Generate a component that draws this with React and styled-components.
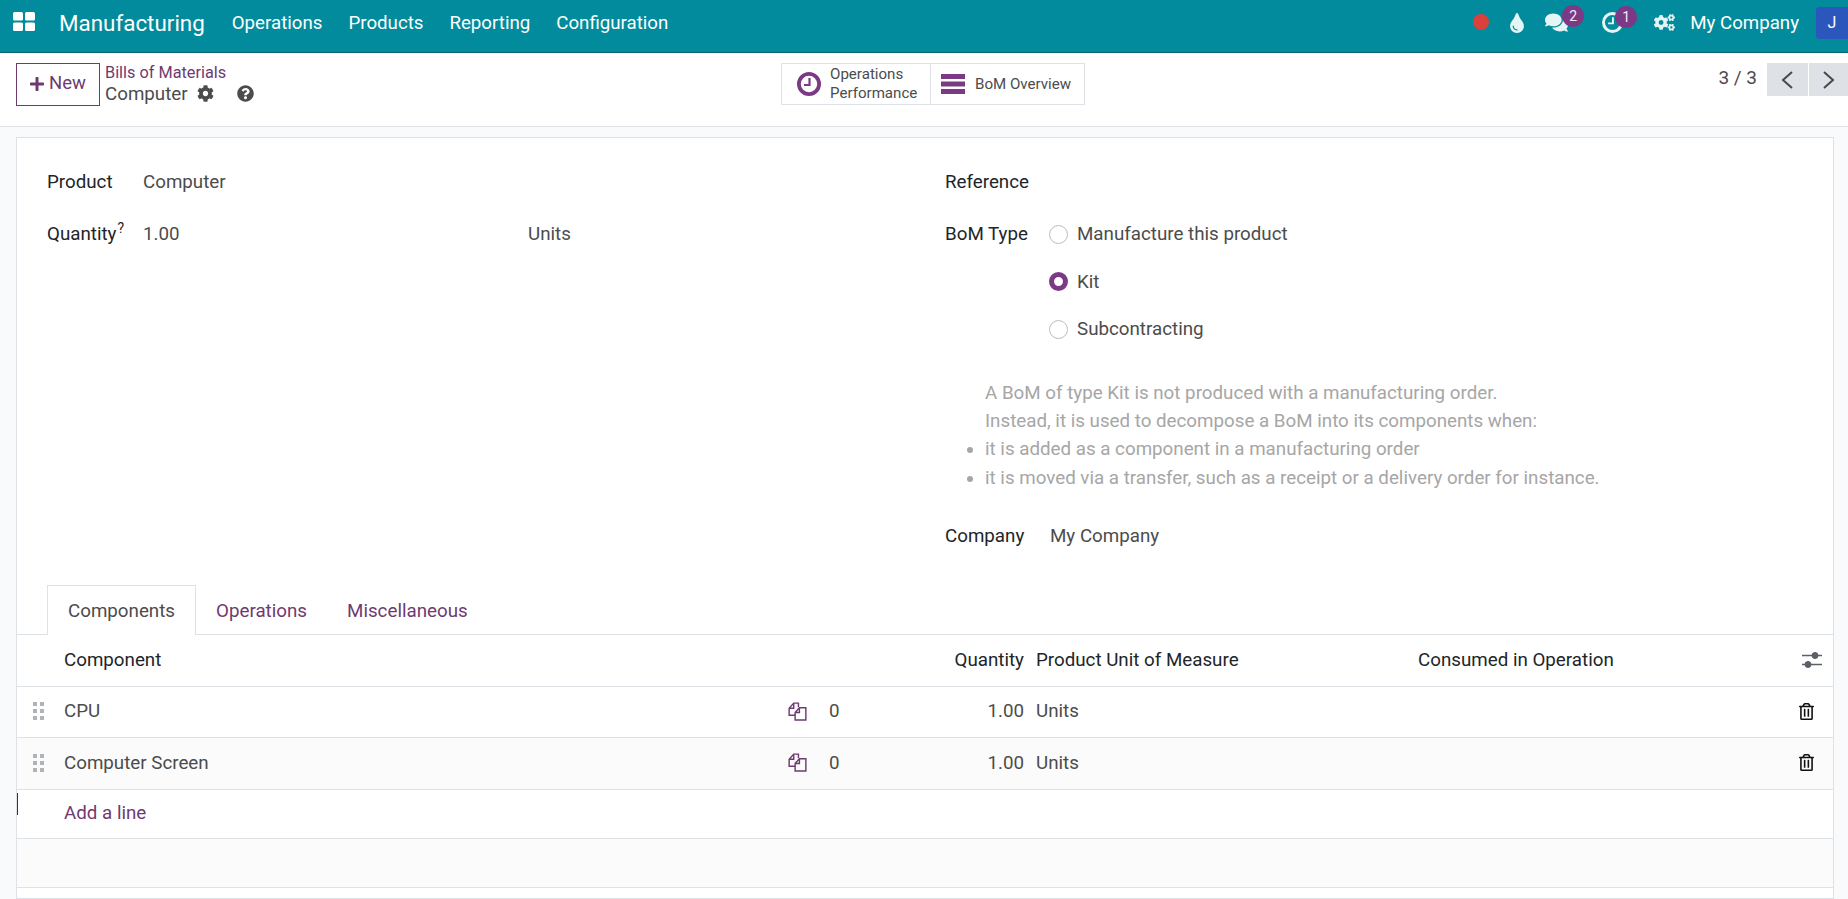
import React from 'react';
import styled, { createGlobalStyle } from 'styled-components';
import { FaCog, FaQuestionCircle, FaPlus, FaTint, FaComments, FaCogs, FaRegTrashAlt } from 'react-icons/fa';

const GlobalStyle = createGlobalStyle`
  html, body { margin: 0; padding: 0; height: 100%; overflow: hidden; }
  body { font-family: Roboto, "Liberation Sans", sans-serif; font-size: 18.75px; color: #4c4c4c; background: #f9fafb; }
  * { box-sizing: border-box; }
`;

const purple = '#6f3a70';
const vivid = '#7c3a86';

const Page = styled.div`
  width: 1848px;
  height: 899px;
  display: flex;
  flex-direction: column;
  overflow: hidden;
`;

const NavBar = styled.header`
  height: 53px;
  flex: none;
  background: #018b9c;
  border-bottom: 1px solid #01666f;
  display: flex;
  align-items: center;
  color: #fff;
  padding: 0 0 7px 13px;
`;

const AppsIcon = styled.svg`
  width: 22px;
  height: 19px;
  fill: #fff;
  margin-top: -2px;
`;

const Brand = styled.span`
  font-size: 22.4px;
  margin-left: 24px;
  margin-right: 14px;
`;

const NavItem = styled.span`
  font-size: 18.7px;
  padding: 0 13px;
`;

const Spacer = styled.div`
  flex: 1;
`;

const RecDot = styled.span`
  width: 16px;
  height: 16px;
  border-radius: 50%;
  background: #d9413a;
  margin-right: 18px;
  margin-top: -1px;
`;

const NavIcon = styled.span`
  position: relative;
  display: flex;
  color: #e4f5f6;
  font-size: ${p => p.$size || 20}px;
  margin-right: ${p => p.$gap || 0}px;
`;

const Badge = styled.span`
  position: absolute;
  left: ${p => p.$left}px;
  top: -6px;
  width: 22px;
  height: 22px;
  border-radius: 50%;
  background: ${vivid};
  color: #f3e6f3;
  font-size: 14px;
  display: flex;
  align-items: center;
  justify-content: center;
`;

const CompanyName = styled.span`
  font-size: 18.7px;
  margin-right: 17px;
`;

const Avatar = styled.span`
  width: 32px;
  height: 32px;
  border-radius: 4px 0 0 4px;
  background: #2b56bb;
  font-size: 16px;
  display: flex;
  align-items: center;
  justify-content: center;
`;

const ControlPanel = styled.div`
  height: 74px;
  flex: none;
  background: #fff;
  border-bottom: 1px solid #dee2e6;
  display: grid;
  grid-template-columns: 765px 1fr auto;
  padding: 10px 0 0 16px;
`;

const LeftGroup = styled.div`
  display: flex;
  align-items: flex-start;
  gap: 5px;
`;

const NewButton = styled.button`
  width: 84px;
  height: 43px;
  background: #fff;
  border: 1px solid ${purple};
  color: ${purple};
  font: inherit;
  font-size: 18.5px;
  line-height: 1;
  padding: 0 1px 2px 0;
  display: flex;
  align-items: center;
  justify-content: center;
  gap: 4px;
  svg { font-size: 16px; }
`;

const Crumbs = styled.div`
  display: flex;
  flex-direction: column;
  margin-top: -1px;
`;

const CrumbLink = styled.span`
  color: ${purple};
  font-size: 16.3px;
  line-height: 21px;
`;

const CrumbCurrent = styled.div`
  display: flex;
  align-items: center;
  line-height: 22px;
  svg { font-size: 17px; margin-top: -2px; }
  span { margin-right: 9px; }
  svg + svg { margin-left: 23px; }
`;

const StatBar = styled.div`
  display: flex;
  align-self: start;
  width: 304px;
  height: 42px;
  border: 1px solid #dee2e6;
`;

const StatButton = styled.div`
  display: flex;
  align-items: center;
  padding-left: ${p => p.$pad}px;
  gap: ${p => p.$gap}px;
  width: ${p => p.$w}px;
  flex: none;
  font-size: 15.1px;
  line-height: 19px;
  color: #4c4c4c;
  & + & { border-left: 1px solid #dee2e6; }
`;

const Pager = styled.div`
  display: flex;
  align-items: flex-start;
`;

const PagerText = styled.span`
  font-size: 19px;
  margin-top: 3px;
  margin-right: 10px;
  line-height: 24px;
`;

const PagerButton = styled.button`
  width: 41px;
  height: 33px;
  border: 0;
  padding: 0;
  background: #dee2e6;
  color: #45494e;
  display: flex;
  align-items: center;
  justify-content: center;
  & + & { margin-left: 1px; width: 39px; }
`;

const Content = styled.main`
  flex: 1;
  padding: 10px 14px 0 16px;
  min-height: 0;
`;

const Sheet = styled.section`
  background: #fff;
  border: 1px solid #dee2e6;
  height: 100%;
  padding-top: 32px;
`;

const FormGrid = styled.div`
  display: grid;
  grid-template-columns: 898px 1fr;
  height: 415px;
  padding-left: 30px;
`;

const Group = styled.div`
  display: flex;
  flex-direction: column;
`;

const Row = styled.div`
  display: flex;
  align-items: flex-start;
  min-height: 24px;
  line-height: 24px;
  margin-bottom: ${p => p.$mb || 0}px;
`;

const Label = styled.label`
  color: #212529;
  width: ${p => p.$w}px;
  flex: none;
  sup { font-size: 14px; line-height: 0; margin-left: 1px; }
`;

const Value = styled.span`
  width: ${p => p.$w || 'auto'};
`;

const RadioGroup = styled.div`
  display: flex;
  flex-direction: column;
  gap: 23.5px;
`;

const RadioRow = styled.div`
  display: flex;
  align-items: center;
  height: 24px;
  gap: 9px;
`;

const RadioMark = styled.span`
  width: 19px;
  height: 19px;
  border-radius: 50%;
  background: #fff;
  border: ${p => (p.$on ? `5.5px solid ${vivid}` : '1px solid #bdbdbd')};
`;

const Help = styled.div`
  margin: 38px 0 32px 40px;
  line-height: 28.2px;
  color: #a6a6a6;
  ul { margin: 0; padding: 0; list-style-position: outside; }
`;

const Tabs = styled.nav`
  display: flex;
  height: 50px;
  padding-left: 30px;
  border-bottom: 1px solid #dee2e6;
`;

const Tab = styled.span`
  display: flex;
  align-items: center;
  padding: 1px 20px 0;
  height: 50px;
  color: ${p => (p.$active ? '#4c4c4c' : purple)};
  ${p => p.$active && 'background: #fff; border: 1px solid #dee2e6; border-bottom: 0;'}
`;

const TableRow = styled.div`
  display: grid;
  grid-template-columns: 47px 724px 41px 60px 135px 12px 382px 1fr 44px;
  align-items: center;
  height: ${p => p.$h}px;
  padding-bottom: 2px;
  border-bottom: 1px solid #dee2e6;
  background: ${p => (p.$alt ? '#fbfbfb' : '#fff')};
  position: relative;
`;

const HeadCell = styled.span`
  color: #212529;
  grid-column: ${p => p.$col};
  text-align: ${p => (p.$right ? 'right' : 'left')};
`;

const Cell = styled.span`
  grid-column: ${p => p.$col};
  text-align: ${p => (p.$right ? 'right' : 'left')};
  display: ${p => (p.$flex ? 'flex' : 'block')};
  color: ${p => p.$color || 'inherit'};
  padding-left: ${p => p.$pad || 0}px;
`;

const Caret = styled.span`
  position: absolute;
  left: 0;
  top: 3px;
  width: 1px;
  height: 22px;
  background: #333;
`;

const Handle = () => (
  <svg width="11" height="18" viewBox="0 0 11 18" fill="#b0b4b8">
    {[0, 7, 14].map(y => (
      <React.Fragment key={y}>
        <rect x="0" y={y} width="4" height="4" />
        <rect x="7" y={y} width="4" height="4" />
      </React.Fragment>
    ))}
  </svg>
);

const FilesIcon = () => (
  <svg width="19" height="19" viewBox="0 0 20 20" fill="none" stroke={purple} strokeWidth="1.5">
    <path d="M7.5 14H1.2V6.5L6 1.2h5v4" />
    <path d="M6 1.5V6.5H1.5" />
    <path d="M7.5 11l4.5-5h6.8v13H7.5z" />
    <path d="M12 6.2V11H7.5" />
  </svg>
);

const ClockIcon = ({ size, color, stroke }) => (
  <svg width={size} height={size} viewBox="0 0 24 24" fill="none" stroke={color} strokeWidth={stroke}>
    <circle cx="12" cy="12" r={12 - stroke / 2} />
    <path d="M12.5 6v7H7" strokeWidth="2.2" />
  </svg>
);

const SlidersIcon = () => (
  <svg width="20" height="16" viewBox="0 0 20 16" fill="#5a5f68" stroke="#5a5f68">
    <path d="M0 3.5h20M0 12.5h20" strokeWidth="1.4" />
    <circle cx="13" cy="3.5" r="3" />
    <circle cx="6" cy="12.5" r="3" />
  </svg>
);

const BarsIcon = () => (
  <svg width="24" height="20" viewBox="0 0 24 20" fill={vivid}>
    <rect y="0" width="24" height="5" />
    <rect y="7.5" width="24" height="5" />
    <rect y="15" width="24" height="5" />
  </svg>
);

const Chevron = ({ flip }) => (
  <svg width="13" height="18" viewBox="0 0 13 18" fill="none" stroke="#45494e" strokeWidth="2">
    <path d={flip ? 'M2 1l9 8-9 8' : 'M11 1L2 9l9 8'} />
  </svg>
);

const lines = [
  { name: 'CPU', h: 51 },
  { name: 'Computer Screen', h: 52, alt: true },
];

export default function App() {
  return (
    <Page>
      <GlobalStyle />
      <NavBar>
        <AppsIcon viewBox="0 0 22 19">
          <rect x="0" y="0" width="10" height="8.5" rx="1.5" />
          <rect x="12" y="0" width="10" height="8.5" rx="1.5" />
          <rect x="0" y="10.5" width="10" height="8.5" rx="1.5" />
          <rect x="12" y="10.5" width="10" height="8.5" rx="1.5" />
        </AppsIcon>
        <Brand>Manufacturing</Brand>
        <NavItem>Operations</NavItem>
        <NavItem>Products</NavItem>
        <NavItem>Reporting</NavItem>
        <NavItem>Configuration</NavItem>
        <Spacer />
        <RecDot />
        <NavIcon $gap={18}><FaTint /></NavIcon>
        <NavIcon $gap={34} $size={23}><FaComments /><Badge $left={17}>2</Badge></NavIcon>
        <NavIcon $gap={31}><ClockIcon size={21} color="#e4f5f6" stroke={3.4} /><Badge $left={13}>1</Badge></NavIcon>
        <NavIcon $gap={15} $size={21}><FaCogs /></NavIcon>
        <CompanyName>My Company</CompanyName>
        <Avatar>J</Avatar>
      </NavBar>
      <ControlPanel>
        <LeftGroup>
          <NewButton><FaPlus />New</NewButton>
          <Crumbs>
            <CrumbLink>Bills of Materials</CrumbLink>
            <CrumbCurrent><span>Computer</span><FaCog /><FaQuestionCircle /></CrumbCurrent>
          </Crumbs>
        </LeftGroup>
        <StatBar>
          <StatButton $w={148} $pad={15} $gap={9}>
            <ClockIcon size={24} color={vivid} stroke={3.8} />
            <span>Operations<br />Performance</span>
          </StatButton>
          <StatButton $w={154} $pad={10} $gap={10}>
            <BarsIcon />
            <span>BoM Overview</span>
          </StatButton>
        </StatBar>
        <Pager>
          <PagerText>3 / 3</PagerText>
          <PagerButton><Chevron /></PagerButton>
          <PagerButton><Chevron flip /></PagerButton>
        </Pager>
      </ControlPanel>
      <Content>
        <Sheet>
          <FormGrid>
            <Group>
              <Row $mb={28}>
                <Label $w={96}>Product</Label>
                <Value>Computer</Value>
              </Row>
              <Row>
                <Label $w={96}>Quantity<sup>?</sup></Label>
                <Value $w="385px">1.00</Value>
                <Value>Units</Value>
              </Row>
            </Group>
            <Group>
              <Row $mb={28}>
                <Label>Reference</Label>
              </Row>
              <Row>
                <Label $w={104}>BoM Type</Label>
                <RadioGroup>
                  <RadioRow><RadioMark />Manufacture this product</RadioRow>
                  <RadioRow><RadioMark $on />Kit</RadioRow>
                  <RadioRow><RadioMark />Subcontracting</RadioRow>
                </RadioGroup>
              </Row>
              <Help>
                A BoM of type Kit is not produced with a manufacturing order.<br />
                Instead, it is used to decompose a BoM into its components when:
                <ul>
                  <li>it is added as a component in a manufacturing order</li>
                  <li>it is moved via a transfer, such as a receipt or a delivery order for instance.</li>
                </ul>
              </Help>
              <Row>
                <Label $w={105}>Company</Label>
                <Value>My Company</Value>
              </Row>
            </Group>
          </FormGrid>
          <Tabs>
            <Tab $active>Components</Tab>
            <Tab>Operations</Tab>
            <Tab>Miscellaneous</Tab>
          </Tabs>
          <TableRow $h={52}>
            <HeadCell $col="2">Component</HeadCell>
            <HeadCell $col="4 / 6" $right>Quantity</HeadCell>
            <HeadCell $col="7">Product Unit of Measure</HeadCell>
            <HeadCell $col="8">Consumed in Operation</HeadCell>
            <Cell $col="9" $flex $pad={13}><SlidersIcon /></Cell>
          </TableRow>
          {lines.map(line => (
            <TableRow key={line.name} $h={line.h} $alt={line.alt}>
              <Cell $col="1" $flex $pad={16}><Handle /></Cell>
              <Cell $col="2">{line.name}</Cell>
              <Cell $col="3" $flex><FilesIcon /></Cell>
              <Cell $col="4">0</Cell>
              <Cell $col="5" $right>1.00</Cell>
              <Cell $col="7">Units</Cell>
              <Cell $col="9" $flex $pad={9}><FaRegTrashAlt size={17} color="#111" /></Cell>
            </TableRow>
          ))}
          <TableRow $h={49}>
            <Caret />
            <Cell $col="2" $color={purple}>Add a line</Cell>
          </TableRow>
          <TableRow $h={49} $alt />
        </Sheet>
      </Content>
    </Page>
  );
}
